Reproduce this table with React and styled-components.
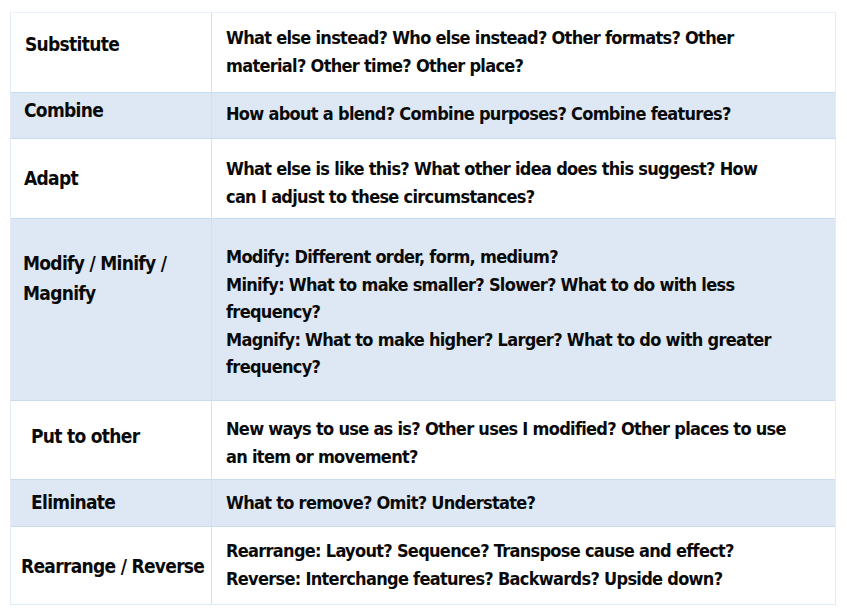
import React from 'react';
import styled, { createGlobalStyle } from 'styled-components';

const GlobalStyle = createGlobalStyle`
  body {
    margin: 0;
    background: #ffffff;
    font-family: "DejaVu Sans Condensed", "DejaVu Sans", sans-serif;
  }
`

const Page = styled.div`
  padding: 12px 11px 0 10px;
`

const Table = styled.div`
  display: grid;
  grid-template-columns: 201px 1fr;
  border: 1px solid #e2ecf6;
  border-top-color: #eaf1f8;
`

const Row = styled.div`
  display: contents;
  & > div {
    background: ${p => (p.$shaded ? '#dde8f4' : '#ffffff')};
    height: ${p => p.$height}px;
    border-top: ${p => (p.$first ? 'none' : '1px solid #c9dbee')};
  }
`

const Label = styled.div`
  box-sizing: border-box;
  padding: ${p => p.$top}px 0 0 ${p => p.$indent}px;
  border-right: 1px solid #d3e2f1;
  font-size: 19px;
  font-stretch: condensed;
  font-weight: 700;
  letter-spacing: -0.7px;
  line-height: 30px;
  color: #0a0a0a;
  white-space: pre-line;
`

const Text = styled.div`
  box-sizing: border-box;
  padding: ${p => p.$top}px 44px 0 14px;
  font-size: 18px;
  font-stretch: condensed;
  font-weight: 700;
  letter-spacing: -0.7px;
  line-height: 27.6px;
  color: #0a0a0a;
`

const rows = [
  { label: 'Substitute', indent: 14, labelTop: 16, top: 11, height: 79,
    text: ['What else instead? Who else instead? Other formats? Other material? Other time? Other place?'] },
  { label: 'Combine', indent: 13, labelTop: 2, top: 7, height: 46, shaded: true,
    text: ['How about a blend? Combine purposes? Combine features?'] },
  { label: 'Adapt', indent: 13, labelTop: 24, top: 16, height: 80,
    text: ['What else is like this? What other idea does this suggest? How can I adjust to these circumstances?'] },
  { label: 'Modify / Minify /\nMagnify', indent: 12, labelTop: 29, top: 24, height: 182, shaded: true,
    text: [
      'Modify: Different order, form, medium?',
      'Minify: What to make smaller? Slower? What to do with less frequency?',
      'Magnify: What to make higher? Larger? What to do with greater frequency?',
    ] },
  { label: 'Put to other', indent: 20, labelTop: 20, top: 14, height: 79,
    text: ['New ways to use as is? Other uses I modified? Other places to use an item or movement?'] },
  { label: 'Eliminate', indent: 20, labelTop: 7, top: 9, height: 47, shaded: true,
    text: ['What to remove? Omit? Understate?'] },
  { label: 'Rearrange / Reverse', indent: 10, labelTop: 24, top: 10, height: 78,
    text: [
      'Rearrange: Layout? Sequence? Transpose cause and effect?',
      'Reverse: Interchange features? Backwards? Upside down?',
    ] },
];

export default function App() {
  return (
    <Page>
      <GlobalStyle />
      <Table>
        {rows.map((r, i) => (
          <Row key={r.label} $shaded={r.shaded} $height={r.height} $first={i === 0}>
            <Label $indent={r.indent} $top={r.labelTop}>{r.label}</Label>
            <Text $top={r.top}>
              {r.text.map(t => <div key={t}>{t}</div>)}
            </Text>
          </Row>
        ))}
      </Table>
    </Page>
  );
}
